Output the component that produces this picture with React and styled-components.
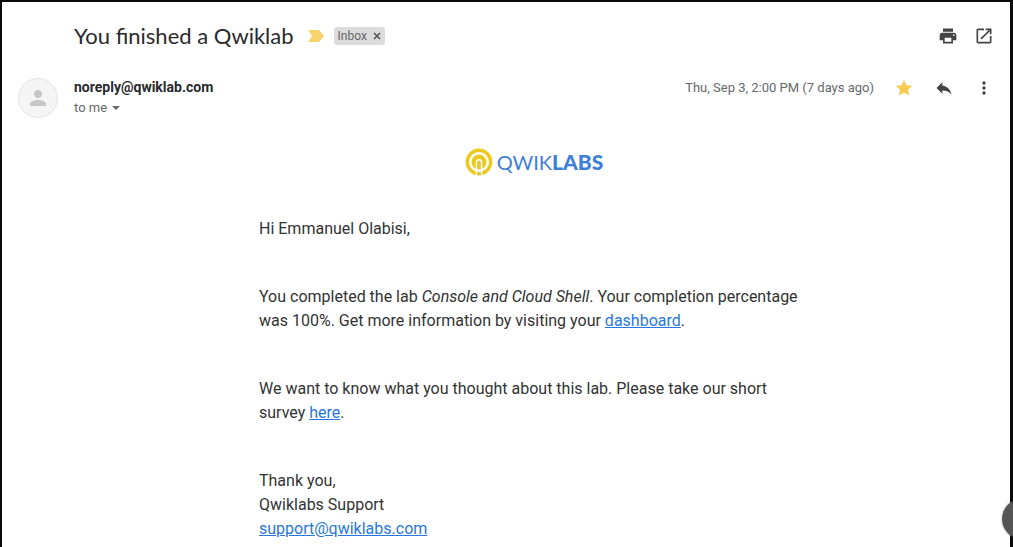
import React from 'react';
import styled, { createGlobalStyle } from 'styled-components';

const GlobalStyle = createGlobalStyle`
  *, *::before, *::after { box-sizing: border-box; }
  body {
    margin: 0;
    background: #fff;
    color: #333;
    font-family: Roboto, "Liberation Sans", sans-serif;
    overflow-x: hidden;
  }
`;

const Page = styled.main`
  min-height: 100vh;
  padding: 14px 16px 6px;
  border: solid #0b0b0b;
  border-width: 2px 3px 0 2px;
`;

const SubjectRow = styled.header`
  display: flex;
  align-items: center;
  height: 40px;
  padding-left: 56px;
`;

const Subject = styled.h1`
  margin: 0;
  font-family: Lato, Roboto, sans-serif;
  font-size: 22px;
  line-height: 28px;
  font-weight: 400;
  color: #2a2a2c;
  white-space: nowrap;
`;

const Importance = styled.svg`
  width: 16px;
  height: 12px;
  margin: 0 10px 0 14px;
  flex: none;
`;

const Label = styled.span`
  display: flex;
  align-items: center;
  height: 18px;
  padding: 0 4px;
  border-radius: 3px;
  background: #dcdcdc;
  color: #666;
  font-size: 12px;
  line-height: 18px;
`;

const LabelRemove = styled.button`
  display: flex;
  margin: 0 0 0 6px;
  padding: 0;
  border: 0;
  background: none;
  color: #555;
`;

const Actions = styled.div`
  display: flex;
  align-items: center;
  gap: 16px;
  margin-left: auto;
`;

const IconButton = styled.button`
  display: flex;
  padding: 0;
  border: 0;
  background: none;
  color: ${(p) => p.$color || '#444'};
  cursor: pointer;
`;

const SenderRow = styled.section`
  display: flex;
  margin-top: 22px;
`;

const Avatar = styled.div`
  display: flex;
  align-items: center;
  justify-content: center;
  width: 40px;
  height: 40px;
  margin-right: 16px;
  border: 1px solid #e4e4e4;
  border-radius: 50%;
  background: #f5f5f5;
  color: #c6c6c6;
`;

const SenderName = styled.div`
  font-size: 14px;
  line-height: 18px;
  font-weight: 700;
  color: #2a2a2c;
`;

const Recipient = styled.button`
  display: flex;
  align-items: center;
  gap: 5px;
  padding: 0;
  border: 0;
  background: none;
  color: #666a6d;
  font: 13px/24px Roboto, sans-serif;
`;

const Meta = styled(Actions)`
  height: 20px;
  gap: 20px;
`;

const Time = styled.time`
  font-size: 13px;
  line-height: 20px;
  color: #666a6d;
`;

const BodyArea = styled.div`
  padding-left: 56px;
`;

const Body = styled.article`
  max-width: 550px;
  margin: 28px auto 0;
  font-size: 16px;
  line-height: 24px;
`;

const Logo = styled.div`
  display: flex;
  align-items: center;
  justify-content: center;
  gap: 4px;
  height: 28px;
  margin-bottom: 41px;
  font-family: Lato, sans-serif;
  font-size: 20px;
  line-height: 28px;
  font-weight: 400;
  color: #3d7edb;
`;

const LogoStrong = styled.b`
  font-size: 21px;
  font-weight: 900;
`;

const Paragraph = styled.p`
  margin: 0 0 ${(p) => (p.$last ? 0 : 44)}px;
`;

const Link = styled.a`
  color: #2878dc;
  text-decoration: underline;
`;

const SideHandle = styled.div`
  position: fixed;
  right: -29px;
  bottom: 8px;
  width: 40px;
  height: 40px;
  border-radius: 50%;
  background: #555;
  box-shadow: 0 0 3px rgba(0, 0, 0, 0.3);
`;

const Icon = ({ d, size = 20 }) => (
  <svg width={size} height={size} viewBox="0 0 24 24" fill="currentColor" aria-hidden="true">
    <path d={d} />
  </svg>
);

const paths = {
  print: 'M19 8H5c-1.66 0-3 1.34-3 3v6h4v4h12v-4h4v-6c0-1.66-1.34-3-3-3zm-3 11H8v-5h8v5zm3-7c-.55 0-1-.45-1-1s.45-1 1-1 1 .45 1 1-.45 1-1 1zm-1-9H6v4h12V3z',
  open: 'M19 19H5V5h7V3H5c-1.11 0-2 .9-2 2v14c0 1.1.89 2 2 2h14c1.1 0 2-.9 2-2v-7h-2v7zM14 3v2h3.59l-9.83 9.83 1.41 1.41L19 6.41V10h2V3h-7z',
  star: 'M12 17.27L18.18 21l-1.64-7.03L22 9.24l-7.19-.61L12 2 9.19 8.63 2 9.24l5.46 4.73L5.82 21z',
  reply: 'M10 9V5l-7 7 7 7v-4.1c5 0 8.5 1.6 11 5.1-1-5-4-10-11-11z',
  more: 'M12 8c1.1 0 2-.9 2-2s-.9-2-2-2-2 .9-2 2 .9 2 2 2zm0 2c-1.1 0-2 .9-2 2s.9 2 2 2 2-.9 2-2-.9-2-2-2zm0 6c-1.1 0-2 .9-2 2s.9 2 2 2 2-.9 2-2-.9-2-2-2z',
  person: 'M12 12c2.21 0 4-1.79 4-4s-1.79-4-4-4-4 1.79-4 4 1.79 4 4 4zm0 2c-2.67 0-8 1.34-8 4v2h16v-2c0-2.66-5.33-4-8-4z',
};

export default function App() {
  return (
    <>
      <GlobalStyle />
      <Page>
        <SubjectRow>
          <Subject>You finished a Qwiklab</Subject>
          <Importance viewBox="0 0 16 12" aria-hidden="true">
            <path d="M0 0H10Q11 0 12 1L16 6L12 11Q11 12 10 12H0L4 6Z" fill="#f6d36b" />
          </Importance>
          <Label>
            Inbox
            <LabelRemove aria-label="Remove label Inbox">
              <svg width="8" height="8" viewBox="0 0 8 8" stroke="currentColor" strokeWidth="1.6" aria-hidden="true">
                <path d="M1 1L7 7M7 1L1 7" />
              </svg>
            </LabelRemove>
          </Label>
          <Actions>
            <IconButton aria-label="Print"><Icon d={paths.print} /></IconButton>
            <IconButton aria-label="Open in new window"><Icon d={paths.open} /></IconButton>
          </Actions>
        </SubjectRow>
        <SenderRow>
          <Avatar><Icon d={paths.person} size={24} /></Avatar>
          <div>
            <SenderName>noreply@qwiklab.com</SenderName>
            <Recipient>
              to me
              <svg width="8" height="4" viewBox="0 0 8 4" fill="currentColor" aria-hidden="true">
                <path d="M0 0H8L4 4Z" />
              </svg>
            </Recipient>
          </div>
          <Meta>
            <Time>Thu, Sep 3, 2:00 PM (7 days ago)</Time>
            <IconButton $color="#f7cb4d" aria-label="Starred"><Icon d={paths.star} /></IconButton>
            <IconButton aria-label="Reply"><Icon d={paths.reply} /></IconButton>
            <IconButton aria-label="More"><Icon d={paths.more} /></IconButton>
          </Meta>
        </SenderRow>
        <BodyArea>
          <Body>
            <Logo>
              <svg width="28" height="28" viewBox="0 0 28 28" aria-hidden="true">
                <circle cx="14" cy="14" r="11.7" fill="none" stroke="#ecc91f" strokeWidth="3.4" />
                <circle cx="14" cy="14" r="7.4" fill="#ecc91f" />
                <path d="M11.4 28V14.4a2.6 2.6 0 0 1 5.2 0V28" fill="none" stroke="#fff" strokeWidth="1.4" />
              </svg>
              <span>QWIK<LogoStrong>LABS</LogoStrong></span>
            </Logo>
            <Paragraph>Hi Emmanuel Olabisi,</Paragraph>
            <Paragraph>
              You completed the lab <em>Console and Cloud Shell</em>. Your completion percentage
              was 100%. Get more information by visiting your <Link href="#dashboard">dashboard</Link>.
            </Paragraph>
            <Paragraph>
              We want to know what you thought about this lab. Please take our short survey{' '}
              <Link href="#survey">here</Link>.
            </Paragraph>
            <Paragraph $last>
              Thank you,
              <br />
              Qwiklabs Support
              <br />
              <Link href="mailto:support@qwiklabs.com">support@qwiklabs.com</Link>
            </Paragraph>
          </Body>
        </BodyArea>
        <SideHandle />
      </Page>
    </>
  );
}
